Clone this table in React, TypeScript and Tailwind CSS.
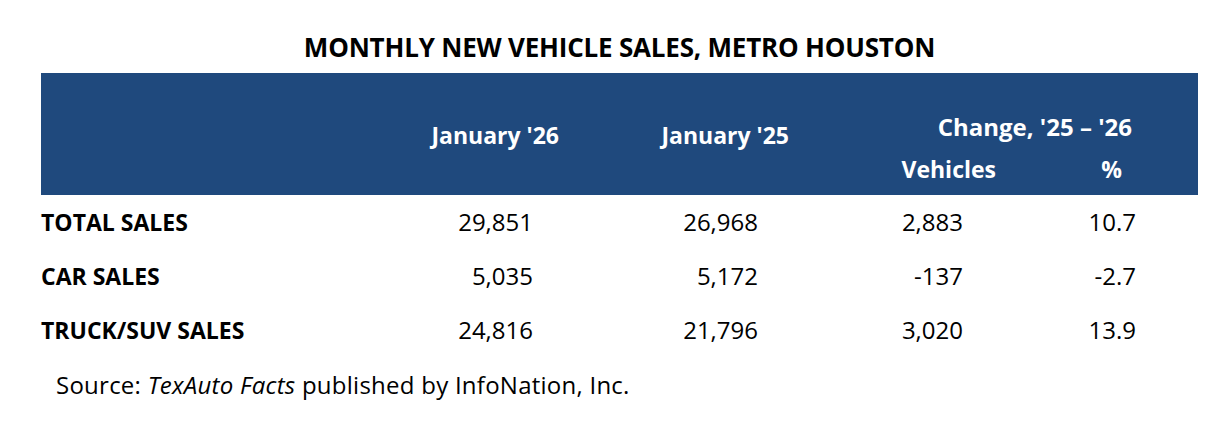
import React from "react"

const rows = [
  { label: "TOTAL SALES", jan26: "29,851", jan25: "26,968", veh: "2,883", pct: "10.7" },
  { label: "CAR SALES", jan26: "5,035", jan25: "5,172", veh: "-137", pct: "-2.7" },
  { label: "TRUCK/SUV SALES", jan26: "24,816", jan25: "21,796", veh: "3,020", pct: "13.9" },
]

export default function App() {
  return (
    <div className="w-[1232px] h-[428px] bg-white text-black" style={{ fontFamily: "'Open Sans', Lato, sans-serif" }}>
      <div className="ml-[41px] w-[1157px]">
        {/* Title */}
        <div className="h-[73px] pt-[33px] text-center text-[26px] font-bold leading-[28px] tracking-[-0.2px]">
          MONTHLY NEW VEHICLE SALES, METRO HOUSTON
        </div>

        {/* Header band */}
        <div className="h-[122px] bg-[#1f497d] pt-[40px] text-white font-bold text-[23px] leading-[28px] grid grid-cols-[350px_198px_230px_211px_168px] grid-rows-[28px_28px] gap-y-[14px]">
          <div className="row-span-2" />
          <div className="row-span-2 mt-[8px] text-right pr-[30px]">January '26</div>
          <div className="row-span-2 mt-[8px] text-right pr-[30px]">January '25</div>
          <div className="col-span-2 text-right pr-[66px] text-[24px]">Change, '25 – '26</div>
          <div className="text-right pr-[34px]">Vehicles</div>
          <div className="text-right pr-[76px]">%</div>
        </div>

        {/* Body rows */}
        {rows.map((r) => (
          <div key={r.label} className="h-[54px] grid grid-cols-[350px_198px_230px_211px_168px] items-center text-[24px] leading-[28px]">
            <div className="font-bold text-[23px]">{r.label}</div>
            <div className="text-right pr-[56px]">{r.jan26}</div>
            <div className="text-right pr-[61px]">{r.jan25}</div>
            <div className="text-right pr-[67px]">{r.veh}</div>
            <div className="text-right pr-[62px]">{r.pct}</div>
          </div>
        ))}

        <div className="mt-[14px] ml-[15px] text-[24px] leading-[28px] tracking-[0.25px]">
          Source: <span className="italic">TexAuto Facts</span> published by InfoNation, Inc.
        </div>
      </div>
    </div>
  )
}
